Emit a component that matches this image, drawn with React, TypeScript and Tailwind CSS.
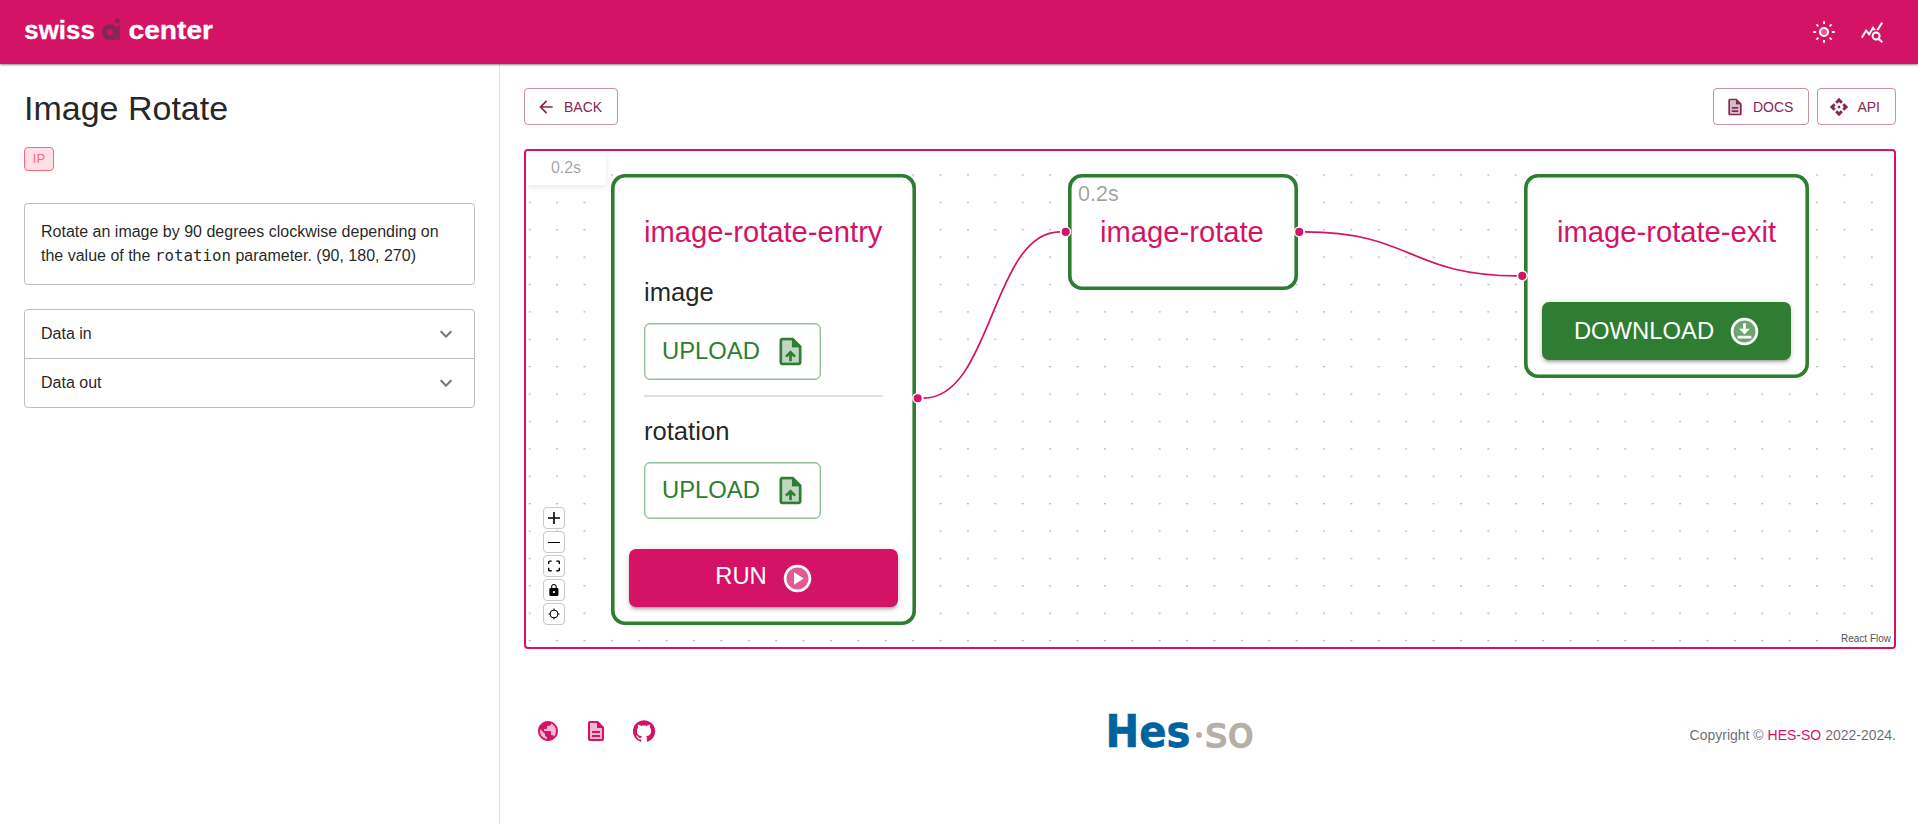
import type { ReactNode } from "react";

type IconProps = { className?: string; children: ReactNode; viewBox?: string };

function Icon({ className = "size-6", children, viewBox = "0 0 24 24" }: IconProps) {
  return (
    <svg viewBox={viewBox} fill="currentColor" className={`shrink-0 ${className}`} aria-hidden="true">
      {children}
    </svg>
  );
}

function DocIcon({ className }: { className?: string }) {
  return (
    <Icon className={className}>
      <path opacity=".3" d="M13 4H6v16h12V9h-5V4zm3 14H8v-2h8v2zm0-6v2H8v-2h8z" />
      <path d="M8 16h8v2H8zm0-4h8v2H8zm6-10H6c-1.1 0-2 .9-2 2v16c0 1.1.89 2 1.99 2H18c1.1 0 2-.9 2-2V8l-6-6zm4 18H6V4h7v5h5v11z" />
    </Icon>
  );
}

function UploadFileIcon() {
  return (
    <Icon className="size-[33px]">
      <path opacity=".3" d="M13 4H6v16h12V9h-5V4zm3 11.01h-3V19h-2v-3.99H8L12.01 11 16 15.01z" />
      <path d="M14 2H6c-1.1 0-1.99.9-1.99 2L4 20c0 1.1.89 2 1.99 2H18c1.1 0 2-.9 2-2V8l-6-6zm4 18H6V4h7v5h5v11zM8 15.01l1.41 1.41L11 14.84V19h2v-4.16l1.59 1.59L16 15.01 12.01 11 8 15.01z" />
    </Icon>
  );
}

function LightIcon() {
  const angles = [0, 45, 90, 135, 180, 225, 270, 315];
  return (
    <Icon>
      <circle cx="12" cy="12" r="3.2" opacity=".3" />
      <circle cx="12" cy="12" r="4" fill="none" stroke="currentColor" strokeWidth="2" />
      {angles.map((a) => (
        <path key={a} d="M12 1.2v2.9" stroke="currentColor" strokeWidth="2" transform={`rotate(${a} 12 12)`} />
      ))}
    </Icon>
  );
}

function Logo() {
  return (
    <svg width="200" height="64" viewBox="0 0 200 64" aria-label="swiss ai center">
      <g fill="#fff" stroke="#fff" strokeWidth=".3" strokeLinejoin="round" fontFamily="Liberation Sans, sans-serif" fontWeight="700" fontSize="26.5">
        <text x="0.3" y="39" textLength="70.5" lengthAdjust="spacingAndGlyphs">swiss</text>
        <text x="104.5" y="39" textLength="84.5" lengthAdjust="spacingAndGlyphs">center</text>
      </g>
      <g fill="#862652">
        <circle cx="86" cy="32.3" r="5.6" fill="none" stroke="#862652" strokeWidth="5" />
        <path d="M90.500 28q3.500-.5 5.200-3.500v15.500h-5.200z" />
        <circle cx="93.400" cy="20.700" r="2.500" />
      </g>
      <path d="M90.800 35.500l2.700 4.500" stroke="#d41367" strokeWidth=".7" />
    </svg>
  );
}

function OutlineButton({ icon, children }: { icon: ReactNode; children: ReactNode }) {
  return (
    <button className="flex h-[37px] items-center gap-2 rounded-[4px] border border-[#862652]/50 pr-[15px] pl-[11px] text-sm text-[#862652]">
      {icon}
      <span>{children}</span>
    </button>
  );
}

function AccordionRow({ label }: { label: string }) {
  return (
    <div className="flex items-center justify-between px-4 py-3">
      <span>{label}</span>
      <Icon className="size-6 text-black/55">
        <path d="M16.59 8.59 12 13.17 7.41 8.59 6 10l6 6 6-6z" />
      </Icon>
    </div>
  );
}

function UploadField({ label }: { label: string }) {
  return (
    <div className="flex flex-col items-start">
      <span className="h-8 text-[25.6px] leading-8 text-black/87">{label}</span>
      <button className="mt-[15px] flex h-[57px] w-[177px] items-center justify-between rounded-[6px] border-[1.5px] border-[#2e7d32]/50 pr-[13px] pl-[17px] text-[#2e7d32] shadow-[inset_0_0_0_0.4px_rgba(46,125,50,0.5)]">
        <span className="pb-0.5 text-[23.8px] leading-8">UPLOAD</span>
        <UploadFileIcon />
      </button>
    </div>
  );
}

function NodeTitle({ children }: { children: ReactNode }) {
  return <h2 className="text-[29.2px] leading-10 whitespace-nowrap text-[#d41367]">{children}</h2>;
}

const nodeFrame = "absolute rounded-[14px] bg-white shadow-[inset_0_0_0_3.6px_#2e7d32]";
const nodeButton =
  "flex items-center justify-center rounded-[7px] text-[23.8px] text-white shadow-[0_4px_2px_-3px_rgba(0,0,0,0.2),0_3px_3px_rgba(0,0,0,0.14),0_1px_7px_rgba(0,0,0,0.12)]";

function Edges() {
  return (
    <svg className="absolute inset-0 size-full" aria-hidden="true">
      <g fill="none" stroke="#d41367" strokeWidth="1.7">
        <path d="M397.500 247.200C466 247.200 466 80.900 534 80.900" />
        <path d="M779 80.900C885 80.900 885 124.900 991 124.900" />
      </g>
      <g fill="#d41367" stroke="#fff" strokeWidth="1.500">
        <circle cx="391.700" cy="247.200" r="4.800" />
        <circle cx="539.700" cy="80.900" r="4.800" />
        <circle cx="773.300" cy="80.900" r="4.800" />
        <circle cx="996.300" cy="124.900" r="4.800" />
      </g>
    </svg>
  );
}

function DotGrid() {
  return (
    <svg className="absolute inset-0 size-full" aria-hidden="true">
      <defs>
        <pattern id="dots" x="-10" y="-4.100" width="27.390" height="27.390" patternUnits="userSpaceOnUse">
          <circle cx="13.700" cy="0.700" r="0.700" fill="#81818a" />
        </pattern>
      </defs>
      <rect width="100%" height="100%" fill="url(#dots)" />
    </svg>
  );
}

function ControlButton({ children }: { children: ReactNode }) {
  return (
    <button className="flex size-[22px] items-center justify-center rounded-[4px] border border-[#c9c9c9] bg-[#fefefe] text-black">
      {children}
    </button>
  );
}

function Controls() {
  return (
    <div className="absolute bottom-[22px] left-[17px] flex flex-col gap-0.5">
      <ControlButton>
        <Icon className="size-3" viewBox="0 0 32 32">
          <path d="M32 18.133H18.133V32h-4.266V18.133H0v-4.266h13.867V0h4.266v13.867H32z" />
        </Icon>
      </ControlButton>
      <ControlButton>
        <Icon className="h-px w-3" viewBox="0 0 12 1">
          <path d="M0 0h12v1H0z" />
        </Icon>
      </ControlButton>
      <ControlButton>
        <Icon className="size-3" viewBox="0 0 32 30">
          <path d="M3.692 4.63c0-.53.4-.938.939-.938h5.215V0H4.708C2.13 0 0 2.054 0 4.63v5.216h3.692V4.631zM27.354 0h-5.2v3.692h5.17c.53 0 .984.4.984.939v5.215H32V4.631A4.624 4.624 0 0027.354 0zm.954 24.83c0 .532-.4.94-.939.94h-5.215v3.768h5.215c2.577 0 4.631-2.13 4.631-4.707v-5.139h-3.692v5.139zm-23.677.94c-.531 0-.939-.4-.939-.94v-5.138H0v5.139c0 2.577 2.13 4.707 4.708 4.707h5.138V25.77H4.631z" />
        </Icon>
      </ControlButton>
      <ControlButton>
        <Icon className="size-3" viewBox="0 0 25 32">
          <path d="M21.333 10.667H19.81V7.619C19.81 3.429 16.38 0 12.19 0 8 0 4.762 3.429 4.762 7.619v3.048H3.048A3.056 3.056 0 000 13.714v15.238A3.056 3.056 0 003.048 32h18.285a3.056 3.056 0 003.048-3.048V13.714a3.056 3.056 0 00-3.048-3.047zM12.19 24.533a3.056 3.056 0 01-3.047-3.047 3.056 3.056 0 013.047-3.048 3.056 3.056 0 013.048 3.048 3.056 3.056 0 01-3.048 3.047zm4.724-13.866H7.467V7.619c0-2.59 2.133-4.724 4.723-4.724 2.591 0 4.724 2.133 4.724 4.724v3.048z" />
        </Icon>
      </ControlButton>
      <ControlButton>
        <Icon className="size-3" viewBox="0 0 12 12">
          <circle cx="6" cy="6" r="4" fill="none" stroke="currentColor" />
          <path d="M6 .5v2M6 9.500v2M.5 6h2M9.500 6h2" stroke="currentColor" />
        </Icon>
      </ControlButton>
    </div>
  );
}

function FlowCanvas() {
  return (
    <section className="relative mt-6 h-[500px] overflow-hidden rounded-[4px] border-2 border-[#d41367]">
      <DotGrid />

      <div className={`${nodeFrame} top-[23px] left-[85px] flex h-[451px] w-[305px] flex-col px-[18px] pt-[38px]`}>
        <div className="px-[15px]">
          <NodeTitle>image-rotate-entry</NodeTitle>
          <div className="pt-[24px]">
            <UploadField label="image" />
          </div>
          <div className="mt-[15px] mb-[18px] h-[2px] w-[239px] bg-[#e0e0e0]" />
          <UploadField label="rotation" />
        </div>
        <button className={`${nodeButton} mt-[30px] h-[58px] gap-[14px] bg-[#d41367] pl-0.5`}>
          <span className="pb-[5px]">RUN</span>
          <Icon className="size-[33px]">
            <circle cx="12" cy="12" r="9" opacity=".3" />
            <path d="M12 2C6.480 2 2 6.480 2 12s4.480 10 10 10 10-4.480 10-10S17.520 2 12 2zm0 18c-4.410 0-8-3.590-8-8s3.590-8 8-8 8 3.590 8 8-3.590 8-8 8zM9.500 16.500l7-4.500-7-4.500z" />
          </Icon>
        </button>
      </div>

      <div className={`${nodeFrame} top-[23px] left-[542px] h-[116px] w-[230px] px-8 pt-[38px]`}>
        <span className="absolute top-1.5 left-2.5 text-[21.500px] leading-7 text-black/38">0.2s</span>
        <NodeTitle>image-rotate</NodeTitle>
      </div>

      <div className={`${nodeFrame} top-[23px] left-[998px] flex h-[204px] w-[285px] flex-col px-[18px] pt-[38px]`}>
        <div className="px-[15px]">
          <NodeTitle>image-rotate-exit</NodeTitle>
        </div>
        <button className={`${nodeButton} mt-[50px] h-[58px] gap-3.5 bg-[#2e7d32] pl-0.5`}>
          <span className="pb-px">DOWNLOAD</span>
          <Icon className="size-[33px]">
            <circle cx="12" cy="12" r="9" opacity=".3" />
            <circle cx="12" cy="12" r="9" fill="none" stroke="currentColor" strokeWidth="2" />
            <path d="M11 10V6h2v4h3l-4 4-4-4h3zM17 17H7v-2h10v2z" />
          </Icon>
        </button>
      </div>

      <Edges />

      <div className="absolute top-0 left-0 flex h-[34px] w-20 items-center justify-center rounded-br-[4px] bg-white text-base text-black/38 shadow-[0_2px_6px_rgba(0,0,0,0.1)]">
        0.2s
      </div>
      <Controls />
      <div className="absolute right-0 bottom-0 bg-white/50 px-[3px] text-[10px] leading-[17px] text-[#555]">
        React Flow
      </div>
    </section>
  );
}

function HesSoLogo() {
  return (
    <svg width="160" height="64" viewBox="-5 -10 160 64" aria-label="Hes-so">
      <text x="-1.500" y="38" textLength="85" lengthAdjust="spacingAndGlyphs" fontFamily="DejaVu Sans, sans-serif" fontWeight="700" fontSize="44" fill="#00629e" stroke="#00629e" strokeWidth=".6">
        Hes
      </text>
      <circle cx="92" cy="26" r="3" fill="#b6afa7" />
      <text x="98" y="38" textLength="49" lengthAdjust="spacingAndGlyphs" fontFamily="DejaVu Sans, sans-serif" fontSize="43" fill="#b6afa7" stroke="#b6afa7" strokeWidth="1.500">
        so
      </text>
    </svg>
  );
}

function Footer() {
  return (
    <footer className="mt-[50px] flex items-center justify-between">
      <div className="flex w-[206px] gap-6 pl-3 text-[#d41367]">
        <Icon>
          <path opacity=".3" d="M14.990 4.590V5c0 1.100-.9 2-2 2h-2v2c0 .55-.45 1-1 1h-2v2h6c.55 0 1 .45 1 1v3h1c.89 0 1.640.59 1.900 1.400C19.190 15.980 20 14.080 20 12c0-3.350-2.080-6.230-5.010-7.410zM8.990 16v-1l-4.780-4.780C4.080 10.790 4 11.390 4 12c0 4.070 3.060 7.430 6.990 7.930V18c-1.100 0-2-.9-2-2z" />
          <path d="M12 2C6.480 2 2 6.480 2 12s4.480 10 10 10 10-4.480 10-10S17.520 2 12 2zm-1 17.930c-3.950-.49-7-3.850-7-7.930 0-.62.08-1.210.21-1.790L9 15v1c0 1.100.9 2 2 2v1.930zm6.900-2.540c-.26-.81-1-1.390-1.900-1.390h-1v-3c0-.55-.45-1-1-1H8v-2h2c.55 0 1-.45 1-1V7h2c1.100 0 2-.9 2-2v-.41c2.930 1.190 5 4.060 5 7.410 0 2.080-.8 3.970-2.100 5.390z" />
        </Icon>
        <DocIcon className="size-6" />
        <Icon>
          <path d="M12 1.270a11 11 0 00-3.480 21.460c.55.09.73-.28.73-.55v-1.840c-3.030.64-3.670-1.460-3.670-1.460-.55-1.290-1.280-1.650-1.280-1.650-.92-.65.1-.65.1-.65 1.100 0 1.730 1.100 1.730 1.100.92 1.650 2.570 1.200 3.210.92a2 2 0 01.64-1.470c-2.470-.27-5.040-1.190-5.040-5.500 0-1.100.46-2.100 1.200-2.840a3.760 3.760 0 010-2.930s.91-.28 3.110 1.100c1.800-.49 3.700-.49 5.500 0 2.100-1.380 3.020-1.100 3.020-1.100a3.760 3.760 0 01.1 2.930c.83.74 1.200 1.740 1.200 2.940 0 4.210-2.570 5.130-5.040 5.400.45.37.82.92.82 2.020v3.030c0 .27.1.64.73.55A11 11 0 0012 1.270" />
        </Icon>
      </div>
      <div className="flex flex-1 justify-center pr-[53px]">
        <HesSoLogo />
      </div>
      <p className="w-[210px] pt-2 text-right text-sm leading-5 text-black/60">
        Copyright © <a className="text-[#d41367]">HES-SO</a> 2022-2024.
      </p>
    </footer>
  );
}

export default function App() {
  return (
    <div className="flex h-[824px] flex-col overflow-hidden bg-white font-['Liberation_Sans',sans-serif] text-base text-black/87">
      <header className="z-10 flex h-16 shrink-0 items-center justify-between bg-[#d41367] pr-[34px] pl-6 text-white shadow-[0_1px_2px_rgba(0,0,0,0.45)]">
        <Logo />
        <div className="flex items-center gap-6">
          <LightIcon />
          <Icon>
            <path d="M19.880 18.470c.44-.7.7-1.510.7-2.390 0-2.490-2.010-4.500-4.500-4.500s-4.500 2.010-4.500 4.500 2.010 4.500 4.490 4.500c.88 0 1.700-.26 2.390-.7L21.580 23 23 21.580l-3.120-3.110zm-3.800.11c-1.380 0-2.500-1.120-2.500-2.500s1.120-2.500 2.500-2.500 2.500 1.120 2.500 2.500-1.120 2.500-2.500 2.500zm-.36-8.500c-.74.02-1.450.18-2.100.45l-.55-.83-3.800 6.180-3.010-3.520-3.630 5.810L1 17l5-8 3 3.500L13 6l2.720 4.080zm2.590.5c-.64-.28-1.330-.45-2.050-.49L21.380 2 23 3.180l-4.690 7.400z" />
          </Icon>
        </div>
      </header>

      <div className="flex min-h-0 flex-1">
        <aside className="w-[500px] shrink-0 border-r border-black/12 p-6">
          <h1 className="h-[42px] text-[34px] leading-10">Image Rotate</h1>
          <span className="mt-[17px] flex h-6 w-[30px] items-center justify-center rounded-[4px] border border-[#ff6384] bg-[#ffe0e6] text-[13px] text-[#ff6384]">
            IP
          </span>
          <p className="mt-8 rounded-[4px] border border-[#bdbdbd] p-4 leading-6">
            Rotate an image by 90 degrees clockwise depending on the value of the{" "}
            <code className="font-['DejaVu_Sans_Mono',monospace] text-[15.800px] leading-none">rotation</code> parameter. (90, 180, 270)
          </p>
          <div className="mt-6 divide-y divide-[#bdbdbd] rounded-[4px] border border-[#bdbdbd]">
            <AccordionRow label="Data in" />
            <AccordionRow label="Data out" />
          </div>
        </aside>

        <main className="min-w-0 flex-1 py-6 pr-[22px] pl-6">
          <div className="flex justify-between">
            <OutlineButton
              icon={
                <Icon className="size-5">
                  <path d="M20 11H7.830l5.590-5.590L12 4l-8 8 8 8 1.410-1.410L7.830 13H20v-2z" />
                </Icon>
              }
            >
              BACK
            </OutlineButton>
            <div className="flex gap-2">
              <OutlineButton icon={<DocIcon className="size-5" />}>DOCS</OutlineButton>
              <OutlineButton
                icon={
                  <Icon className="size-5">
                    <path d="m14 12-2 2-2-2 2-2 2 2zm-2-6 2.120 2.120 2.500-2.500L12 1 7.380 5.620l2.500 2.500L12 6zm-6 6 2.120-2.120-2.500-2.500L1 12l4.620 4.620 2.500-2.500L6 12zm12 0-2.120 2.120 2.500 2.500L23 12l-4.620-4.620-2.500 2.500L18 12zm-6 6-2.120-2.120-2.500 2.500L12 23l4.620-4.620-2.500-2.500L12 18z" />
                  </Icon>
                }
              >
                API
              </OutlineButton>
            </div>
          </div>
          <FlowCanvas />
          <Footer />
        </main>
      </div>
    </div>
  );
}
